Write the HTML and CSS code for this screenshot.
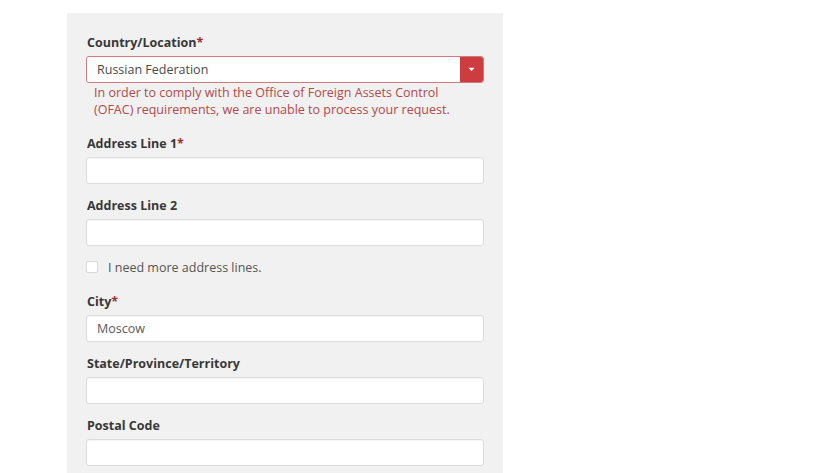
FILE: index.html
```html
<!DOCTYPE html>
<html>
<head>
<meta charset="utf-8">
<link rel="stylesheet" href="styles.css">
</head>
<body>
<div class="panel">
  <div class="field">
    <div class="label">Country/Location<span class="req">*</span></div>
    <div class="select">
      <span class="select-text">Russian Federation</span>
      <span class="select-btn"><svg width="7" height="5" viewBox="0 0 7 5"><path d="M0.5 0.8 L6.5 0.8 L3.5 4.3 Z" fill="#fff"/></svg></span>
    </div>
    <div class="error">In order to comply with the Office of Foreign Assets Control (OFAC) requirements, we are unable to process your request.</div>
  </div>
  <div class="field">
    <div class="label">Address Line 1<span class="req">*</span></div>
    <div class="input"></div>
  </div>
  <div class="field">
    <div class="label">Address Line 2</div>
    <div class="input"></div>
  </div>
  <div class="check-row">
    <span class="checkbox"></span>
    <span class="check-text">I need more address lines.</span>
  </div>
  <div class="field">
    <div class="label">City<span class="req">*</span></div>
    <div class="input"><span class="input-text">Moscow</span></div>
  </div>
  <div class="field">
    <div class="label">State/Province/Territory</div>
    <div class="input"></div>
  </div>
  <div class="field">
    <div class="label">Postal Code</div>
    <div class="input"></div>
  </div>
</div>
</body>
</html>
```
FILE: styles.css
```css
html, body {
  margin: 0;
  padding: 0;
  background: #ffffff;
  height: 100%;
  overflow: hidden;
}
body {
  font-family: "Open Sans", "Liberation Sans", sans-serif;
}
.panel {
  margin: 13px 0 0 67px;
  width: 436px;
  height: 460px;
  box-sizing: border-box;
  padding: 22px 19px 0 19px;
  background: #f1f1f1;
  overflow: hidden;
}
.field {
  display: flex;
  flex-direction: column;
  margin-bottom: 14px;
}
.label {
  font-size: 12.5px;
  line-height: 16px;
  font-weight: 700;
  color: #383838;
  margin-bottom: 5px;
  padding-left: 1px;
}
.req {
  color: #9e2b2f;
}
.select {
  height: 27px;
  box-sizing: border-box;
  border: 1px solid #cf7a7c;
  border-radius: 3px;
  background: #fff;
  display: flex;
  align-items: stretch;
  overflow: hidden;
}
.select-text {
  flex: 1;
  font-size: 12.5px;
  line-height: 25px;
  color: #4a4a4a;
  padding-left: 10px;
}
.select-btn {
  width: 23px;
  background: #cd3c3f;
  display: flex;
  align-items: center;
  justify-content: center;
}
.error {
  margin-top: 1px;
  padding-left: 8px;
  max-width: 360px;
  font-size: 12.5px;
  line-height: 17px;
  color: #b2494b;
  margin-bottom: 4px;
}
.input {
  height: 27px;
  box-sizing: border-box;
  border: 1px solid #dcdcdc;
  border-radius: 3px;
  background: #fff;
  box-shadow: inset 0 1px 1px rgba(0,0,0,0.04);
  display: flex;
  align-items: center;
}
.input-text {
  font-size: 12.5px;
  color: #5a5a5a;
  padding-left: 10px;
}
.check-row {
  display: flex;
  align-items: center;
  height: 16px;
  margin-top: -1px;
  margin-bottom: 19px;
}
.checkbox {
  width: 12px;
  height: 12px;
  box-sizing: border-box;
  border: 1px solid #d8d8d8;
  border-radius: 2px;
  background: #fff;
  margin-right: 10px;
}
.check-text {
  font-size: 12.5px;
  color: #555;
}
```
